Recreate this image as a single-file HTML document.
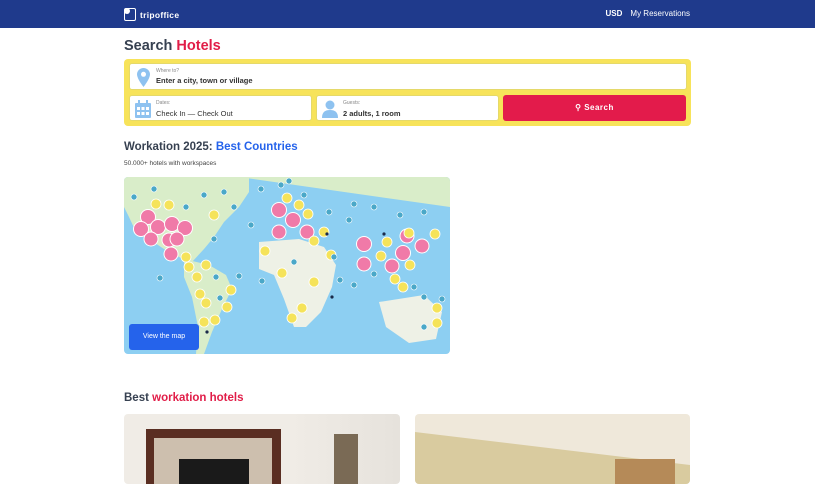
<!DOCTYPE html>
<html><head><meta charset="utf-8"><style>
*{margin:0;padding:0;box-sizing:border-box}
body{width:815px;height:480px;overflow:hidden;background:#fff;font-family:"Liberation Sans",sans-serif;color:#333}
.hdr{height:28px;background:#1f3a8c;position:relative;color:#fff}
.logo{position:absolute;left:124px;top:8px;font-size:8.5px;font-weight:bold;display:flex;align-items:center;gap:4px;letter-spacing:.3px}
.logo i{display:inline-block;width:12px;height:13px;border:1.5px solid #fff;border-radius:2px;position:relative}
.logo i:after{content:"";position:absolute;left:-1px;top:-1px;width:6px;height:6px;background:#fff;border-radius:50%}
.nav{position:absolute;right:125px;top:9px;font-size:8px}
.nav b{margin-right:8px}
h1{position:absolute;left:124px;top:38px;font-size:14.5px;font-weight:bold;color:#374151}
.red{color:#e11d48}.blue{color:#2563eb}
.box{position:absolute;left:124px;top:59px;width:567px;height:67px;background:#f7e35a;border-radius:4px}
.f{position:absolute;background:#fff;border-radius:3px;border:1px solid #e5d96a}
.f .l{position:absolute;left:26px;top:4px;font-size:5px;color:#888}
.f .v{position:absolute;left:26px;top:13px;font-size:7.5px;color:#333}
.btn{position:absolute;left:379px;top:36px;width:183px;height:26px;background:#e31b4b;border-radius:3px;color:#fff;font-size:8px;font-weight:bold;text-align:center;line-height:26px;letter-spacing:.5px}
h2{position:absolute;left:124px;font-size:11.5px;font-weight:bold;color:#374151}
.sub{position:absolute;left:124px;top:160px;font-size:6.5px;color:#444}
.map{position:absolute;left:124px;top:177px;width:326px;height:177px;border-radius:4px;overflow:hidden;background:#8dcff2}
.vm{position:absolute;left:5px;top:147px;width:70px;height:26px;background:#2563eb;border-radius:3px;color:#fff;font-size:7px;text-align:center;line-height:26px}
.card{position:absolute;top:414px;height:70px;border-radius:4px;overflow:hidden}
</style></head><body>
<div class="hdr"><div class="logo"><i></i>tripoffice</div><div class="nav"><b>USD</b>My Reservations</div></div>
<h1>Search <span class="red">Hotels</span></h1>
<div class="box">
 <div class="f" style="left:5px;top:4px;width:558px;height:27px">
  <svg style="position:absolute;left:7px;top:4px" width="13" height="19" viewBox="0 0 13 19"><path d="M6.5 0C3 0 0 2.8 0 6.3 0 11 6.5 19 6.5 19S13 11 13 6.3C13 2.8 10 0 6.5 0z" fill="#8ec2f0"/><circle cx="6.5" cy="6.3" r="2.5" fill="#fff"/></svg>
  <div class="l">Where to?</div><div class="v" style="font-weight:bold;top:12px">Enter a city, town or village</div></div>
 <div class="f" style="left:5px;top:36px;width:183px;height:26px">
  <svg style="position:absolute;left:5px;top:4px" width="16" height="18"><rect x="0" y="3" width="16" height="15" rx="1" fill="#8ec2f0"/><g fill="#fff"><rect x="2" y="7" width="3" height="3"/><rect x="6.5" y="7" width="3" height="3"/><rect x="11" y="7" width="3" height="3"/><rect x="2" y="12" width="3" height="3"/><rect x="6.5" y="12" width="3" height="3"/><rect x="11" y="12" width="3" height="3"/></g><rect x="3" y="0" width="2" height="4" fill="#8ec2f0"/><rect x="11" y="0" width="2" height="4" fill="#8ec2f0"/></svg>
  <div class="l">Dates:</div><div class="v">Check In — Check Out</div></div>
 <div class="f" style="left:192px;top:36px;width:183px;height:26px">
  <svg style="position:absolute;left:5px;top:4px" width="16" height="18"><circle cx="8" cy="5" r="4.5" fill="#8ec2f0"/><path d="M0 18C0 12 3 10 8 10s8 2 8 8z" fill="#8ec2f0"/></svg>
  <div class="l">Guests:</div><div class="v" style="font-weight:bold">2 adults, 1 room</div></div>
 <div class="btn">&#9906; Search</div>
</div>
<h2 style="top:141px">Workation 2025: <span class="blue">Best Countries</span></h2>
<div class="sub">50.000+ hotels with workspaces</div>
<div class="map">
<svg width="326" height="177" viewBox="0 0 326 177">
<g fill="#d9edc9">
<path d="M0 0H125V15L115 30 100 45 90 60 80 72 68 85 55 80 40 72 25 62 12 55 5 40 0 30z"/>
<path d="M60 82L85 88 102 98 108 112 98 132 88 155 80 177 72 177 74 150 68 120 60 100z"/>
<path d="M115 0H326V25 315 45 305 70 290 80 270 92 250 95 235 85 220 75 205 72 195 62 175 62 155 55 140 52 130 42 120 30z"/>
<path d="M135 65L175 62 200 70 212 88 208 110 197 135 182 150 170 150 160 122 150 98 135 92z" fill="#eef1e6"/>
<path d="M255 125L300 118 318 135 312 162 285 166 262 150z" fill="#eef1e6"/>
</g>
<g fill="#f07aa8" stroke="#fff" stroke-width="1">
<circle cx="24" cy="40" r="7.5"/><circle cx="17" cy="52" r="7.5"/><circle cx="34" cy="50" r="7.5"/><circle cx="27" cy="62" r="7"/><circle cx="48" cy="47" r="7.5"/><circle cx="61" cy="51" r="7.5"/><circle cx="45" cy="63" r="7"/><circle cx="53" cy="62" r="7"/><circle cx="47" cy="77" r="7"/>
<circle cx="155" cy="33" r="7.5"/><circle cx="169" cy="43" r="7.5"/><circle cx="155" cy="55" r="7"/><circle cx="183" cy="55" r="7"/>
<circle cx="240" cy="67" r="7.5"/><circle cx="240" cy="87" r="7"/><circle cx="279" cy="76" r="7.5"/><circle cx="298" cy="69" r="7"/><circle cx="283" cy="59" r="7"/><circle cx="268" cy="89" r="7"/>
</g>
<g fill="#f5e35a" stroke="#fff" stroke-width=".8">
<circle cx="32" cy="27" r="5"/><circle cx="45" cy="28" r="5"/><circle cx="90" cy="38" r="5"/><circle cx="62" cy="80" r="5"/><circle cx="65" cy="90" r="5"/><circle cx="73" cy="100" r="5"/><circle cx="82" cy="88" r="5"/><circle cx="76" cy="117" r="5"/><circle cx="82" cy="126" r="5"/><circle cx="107" cy="113" r="5"/><circle cx="103" cy="130" r="5"/><circle cx="80" cy="145" r="5"/><circle cx="91" cy="143" r="5"/>
<circle cx="141" cy="74" r="5"/><circle cx="163" cy="21" r="5"/><circle cx="175" cy="28" r="5"/><circle cx="184" cy="37" r="5"/><circle cx="200" cy="55" r="5"/><circle cx="190" cy="64" r="5"/><circle cx="207" cy="78" r="5"/><circle cx="158" cy="96" r="5"/><circle cx="190" cy="105" r="5"/><circle cx="178" cy="131" r="5"/><circle cx="168" cy="141" r="5"/>
<circle cx="257" cy="79" r="5"/><circle cx="263" cy="65" r="5"/><circle cx="285" cy="56" r="5"/><circle cx="311" cy="57" r="5"/><circle cx="271" cy="102" r="5"/><circle cx="279" cy="110" r="5"/><circle cx="286" cy="88" r="5"/><circle cx="313" cy="131" r="5"/><circle cx="313" cy="146" r="5"/>
</g>
<g fill="#4aa8c8" stroke="#fff" stroke-width=".6">
<circle cx="10" cy="20" r="3"/><circle cx="30" cy="12" r="3"/><circle cx="62" cy="30" r="3"/><circle cx="80" cy="18" r="3"/><circle cx="100" cy="15" r="3"/><circle cx="110" cy="30" r="3"/><circle cx="127" cy="48" r="3"/><circle cx="137" cy="12" r="3"/><circle cx="157" cy="8" r="3"/><circle cx="165" cy="4" r="3"/><circle cx="180" cy="18" r="3"/><circle cx="205" cy="35" r="3"/><circle cx="230" cy="27" r="3"/><circle cx="250" cy="30" r="3"/><circle cx="276" cy="38" r="3"/><circle cx="300" cy="35" r="3"/><circle cx="210" cy="80" r="3"/><circle cx="170" cy="85" r="3"/><circle cx="225" cy="43" r="3"/><circle cx="250" cy="97" r="3"/><circle cx="290" cy="110" r="3"/><circle cx="300" cy="120" r="3"/><circle cx="318" cy="122" r="3"/><circle cx="300" cy="150" r="3"/><circle cx="90" cy="62" r="3"/><circle cx="36" cy="101" r="3"/><circle cx="92" cy="100" r="3"/><circle cx="115" cy="99" r="3"/><circle cx="96" cy="121" r="3"/><circle cx="216" cy="103" r="3"/><circle cx="230" cy="108" r="3"/><circle cx="138" cy="104" r="3"/></g>
<g fill="#1a2a4a"><circle cx="203" cy="57" r="1.6"/><circle cx="260" cy="57" r="1.6"/><circle cx="208" cy="120" r="1.6"/><circle cx="83" cy="155" r="1.6"/></g>
</svg>
<div class="vm">View the map</div>
</div>
<h2 style="top:392px">Best <span class="red">workation hotels</span></h2>
<div class="card" style="left:124px;width:276px;background:linear-gradient(90deg,#f0ece6 0,#f0ece6 60%,#e6e2dc 100%)">
 <div style="position:absolute;left:22px;top:15px;width:135px;height:60px;background:#5a2e22"></div>
 <div style="position:absolute;left:30px;top:24px;width:118px;height:60px;background:#cdbfae"></div>
 <div style="position:absolute;left:55px;top:45px;width:70px;height:40px;background:#1a1a1a"></div>
 <div style="position:absolute;left:210px;top:20px;width:24px;height:60px;background:#7a6a55"></div>
</div>
<div class="card" style="left:415px;width:275px;background:#efe8da">
 <div style="position:absolute;left:0;top:18px;width:275px;height:60px;background:#d9cb9f;clip-path:polygon(0 0,100% 55%,100% 100%,0 100%)"></div>
 <div style="position:absolute;left:200px;top:45px;width:60px;height:30px;background:#b58a58"></div>
</div>
</body></html>
